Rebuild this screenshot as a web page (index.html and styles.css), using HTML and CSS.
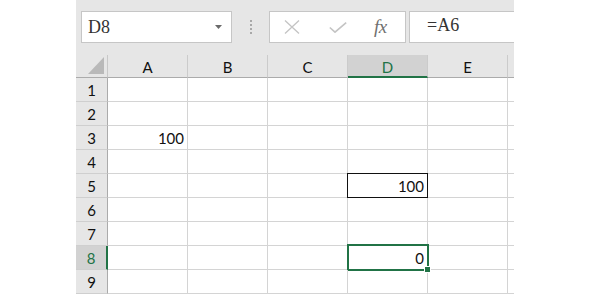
FILE: index.html
```html
<!DOCTYPE html>
<html lang="en">
<head>
    <meta charset="UTF-8">
    <title>Sheet</title>
    <link rel="stylesheet" href="styles.css">
</head>
<body>
    <div class="sheet">
        <div class="toolbar">
            <div class="namebox">
                <span>D8</span>
                <svg class="drop" width="7" height="4" viewBox="0 0 7 4"><path d="M0 0h7L3.5 4z" fill="#6a6a6a"/></svg>
            </div>
            <div class="grip"><span></span><span></span><span></span><span></span></div>
            <div class="fbuttons">
                <svg class="btn-x" width="16" height="14" viewBox="0 0 16 14"><path d="M1 0.5L15 13.5M15 0.5L1 13.5" stroke="#c4c4c4" stroke-width="1.3" fill="none"/></svg>
                <svg class="btn-ok" width="18" height="11" viewBox="0 0 18 11"><path d="M0.8 5.5L6 10.2L17.2 0.6" stroke="#c4c4c4" stroke-width="1.6" fill="none"/></svg>
                <span class="fx">fx</span>
            </div>
            <div class="formula">=A6</div>
        </div>

        <div class="grid">
            <div class="corner"><span class="tri"></span></div>
            <div class="colhead">A</div>
            <div class="colhead">B</div>
            <div class="colhead">C</div>
            <div class="colhead sel">D</div>
            <div class="colhead">E</div>
            <div class="colhead filler"></div>

            <div class="rowhead">1</div><div class="cell"></div><div class="cell"></div><div class="cell"></div><div class="cell"></div><div class="cell"></div><div class="cell end"></div>
            <div class="rowhead">2</div><div class="cell"></div><div class="cell"></div><div class="cell"></div><div class="cell"></div><div class="cell"></div><div class="cell end"></div>
            <div class="rowhead">3</div><div class="cell">100</div><div class="cell"></div><div class="cell"></div><div class="cell"></div><div class="cell"></div><div class="cell end"></div>
            <div class="rowhead">4</div><div class="cell"></div><div class="cell"></div><div class="cell"></div><div class="cell"></div><div class="cell"></div><div class="cell end"></div>
            <div class="rowhead">5</div><div class="cell"></div><div class="cell"></div><div class="cell"></div><div class="cell boxed">100</div><div class="cell"></div><div class="cell end"></div>
            <div class="rowhead">6</div><div class="cell"></div><div class="cell"></div><div class="cell"></div><div class="cell"></div><div class="cell"></div><div class="cell end"></div>
            <div class="rowhead">7</div><div class="cell"></div><div class="cell"></div><div class="cell"></div><div class="cell"></div><div class="cell"></div><div class="cell end"></div>
            <div class="rowhead sel">8</div><div class="cell"></div><div class="cell"></div><div class="cell"></div><div class="cell active">0<span class="handle"></span></div><div class="cell"></div><div class="cell end"></div>
            <div class="rowhead">9</div><div class="cell"></div><div class="cell"></div><div class="cell"></div><div class="cell"></div><div class="cell"></div><div class="cell end"></div>
        </div>
    </div>
</body>
</html>
```

FILE: styles.css
```css
body {
    margin: 0;
    background-color: #ffffff;
    font-family: Lato, 'Liberation Sans', sans-serif;
    overflow: hidden;
}

.sheet {
    margin-left: 76px;
    width: 438px;
}

.toolbar {
    display: flex;
    align-items: flex-start;
    height: 55px;
    box-sizing: border-box;
    padding: 11px 0 0 5px;
    background-color: #e6e6e6;
}

.namebox {
    display: flex;
    align-items: center;
    justify-content: space-between;
    width: 151px;
    height: 32px;
    box-sizing: border-box;
    padding: 0 9px 0 6px;
    background-color: #ffffff;
    border: 1px solid #c6c6c6;
    font-family: 'Liberation Serif', serif;
    font-size: 18px;
    color: #333333;
}

.grip {
    display: flex;
    flex-direction: column;
    align-items: center;
    gap: 2px;
    width: 37px;
    padding-top: 9px;
}

.grip span {
    width: 2px;
    height: 2px;
    background-color: #a8a8a8;
}

.fbuttons {
    display: flex;
    align-items: center;
    width: 137px;
    height: 32px;
    box-sizing: border-box;
    padding-left: 14px;
    background-color: #ffffff;
    border: 1px solid #c6c6c6;
}

.btn-x {
    margin-right: 29px;
}

.btn-ok {
    margin-right: 27px;
}

.fx {
    font-family: 'Liberation Serif', serif;
    font-style: italic;
    font-size: 19px;
    color: #707070;
    letter-spacing: -0.5px;
}

.formula {
    flex: 1;
    height: 32px;
    box-sizing: border-box;
    margin-left: 3px;
    padding: 3px 0 0 17px;
    background-color: #ffffff;
    border: 1px solid #c6c6c6;
    border-right: none;
    font-family: 'Liberation Serif', serif;
    font-size: 18px;
    color: #333333;
}

.grid {
    display: grid;
    grid-template-columns: 32px repeat(5, 80px) 6px;
    grid-template-rows: 23px repeat(9, 24px);
    font-size: 15px;
    color: #111111;
}

.corner {
    position: relative;
    background-color: #e6e6e6;
    border-right: 1px solid #c8c8c8;
    border-bottom: 1px solid #ababab;
}

.tri {
    position: absolute;
    right: 3px;
    bottom: 3px;
    width: 0;
    height: 0;
    border-left: 16px solid transparent;
    border-bottom: 17px solid #b9b9b9;
}

.colhead {
    display: flex;
    align-items: center;
    justify-content: center;
    background-color: #e6e6e6;
    border-right: 1px solid #cbcbcb;
    border-bottom: 1px solid #ababab;
    padding-top: 2px;
    box-sizing: border-box;
}

.colhead.sel {
    background-color: #d2d2d2;
    color: #217346;
    border-bottom: 2px solid #217346;
    padding-top: 3px;
}

.colhead.filler {
    border-right: none;
}

.rowhead {
    display: flex;
    align-items: center;
    justify-content: center;
    background-color: #e6e6e6;
    border-right: 1px solid #ababab;
    border-bottom: 1px solid #cfcfcf;
    box-sizing: border-box;
}

.rowhead.sel {
    background-color: #d2d2d2;
    color: #217346;
    border-right: 2px solid #217346;
}

.cell {
    display: flex;
    align-items: center;
    justify-content: flex-end;
    padding-right: 3px;
    box-sizing: border-box;
    border-right: 1px solid #d4d4d4;
    border-bottom: 1px solid #d4d4d4;
    position: relative;
}

.cell.end {
    border-right: none;
    padding: 0;
}

.cell.boxed::after {
    content: "";
    position: absolute;
    left: -1px;
    top: -1px;
    right: -1px;
    bottom: -1px;
    border: 1px solid #111111;
}

.cell.active::after {
    content: "";
    position: absolute;
    left: -1px;
    top: -2px;
    right: -2px;
    bottom: -2px;
    border: 2px solid #217346;
}

.handle {
    position: absolute;
    right: -4px;
    bottom: -4px;
    width: 5px;
    height: 5px;
    background-color: #217346;
    border: 1px solid #ffffff;
    z-index: 1;
}
```
